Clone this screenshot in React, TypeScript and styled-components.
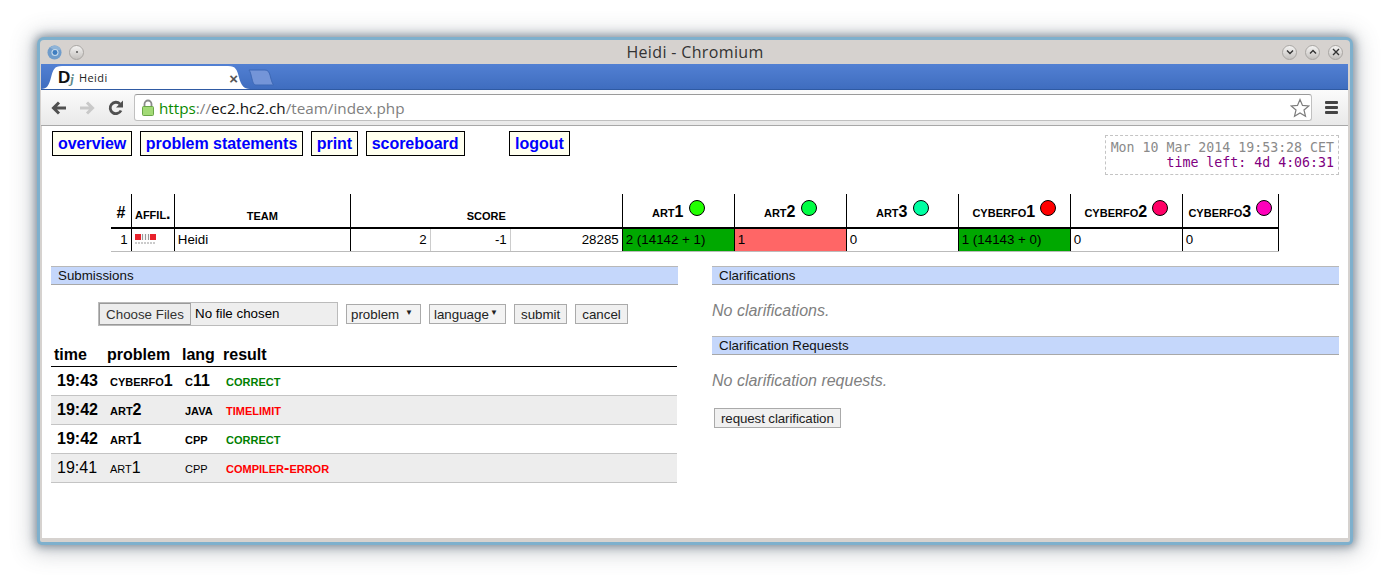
import React from 'react';
import styled, { createGlobalStyle } from 'styled-components';

const GlobalStyle = createGlobalStyle`
  html, body {
    margin: 0;
    padding: 0;
    background: #fff;
  }
  body {
    font-family: "Liberation Sans", Arial, sans-serif;
    font-size: 13.33px;
    color: #000;
  }
`;

const problems = [
  { short: 'art', num: '1', color: '#22ff00', cell: '2 (14142 + 1)', state: 'correct' },
  { short: 'art', num: '2', color: '#00ff44', cell: '1', state: 'wrong' },
  { short: 'art', num: '3', color: '#00ffa2', cell: '0', state: 'none' },
  { short: 'cyberfo', num: '1', color: '#ff0000', cell: '1 (14143 + 0)', state: 'correct' },
  { short: 'cyberfo', num: '2', color: '#ff0066', cell: '0', state: 'none' },
  { short: 'cyberfo', num: '3', color: '#ff00bb', cell: '0', state: 'none' },
];

const submissions = [
  { time: '19:43', prob: 'cyberfo', num: '1', lang: 'c11', result: 'correct', ok: true, fresh: true },
  { time: '19:42', prob: 'art', num: '2', lang: 'java', result: 'timelimit', ok: false, fresh: true },
  { time: '19:42', prob: 'art', num: '1', lang: 'cpp', result: 'correct', ok: true, fresh: true },
  { time: '19:41', prob: 'art', num: '1', lang: 'cpp', result: 'compiler-error', ok: false, fresh: false },
];

const WinButton = ({ kind }: { kind: 'down' | 'up' | 'close' }) => (
  <CircleButton>
    <svg width="10" height="10" viewBox="0 0 10 10" fill="none" stroke="#333" strokeWidth="1.4">
      {kind === 'down' && <path d="M2 3.5 L5 6.5 L8 3.5" />}
      {kind === 'up' && <path d="M2 6.5 L5 3.5 L8 6.5" />}
      {kind === 'close' && <path d="M2 2 L8 8 M8 2 L2 8" />}
    </svg>
  </CircleButton>
);

export default function App() {
  return (
    <>
      <GlobalStyle />
      <Page>
        <Window>
          <TitleBar>
            <TitleLeft>
              <svg width="15" height="15" viewBox="0 0 16 16">
                <circle cx="8" cy="8" r="7.5" fill="#6f9ccb" />
                <path d="M8 .5 A7.5 7.5 0 0 1 15 5.5 L8 5 L3 3 A7.5 7.5 0 0 1 8 .5 Z" fill="#8fb4d8" />
                <circle cx="8.5" cy="8" r="3.8" fill="#c4d8ea" />
                <circle cx="8.5" cy="8" r="2.6" fill="#3f7dc0" />
              </svg>
              <PinButton>
                <PinDot />
              </PinButton>
            </TitleLeft>
            <TitleText>Heidi - Chromium</TitleText>
            <TitleRight>
              <WinButton kind="down" />
              <WinButton kind="up" />
              <WinButton kind="close" />
            </TitleRight>
          </TitleBar>

          <TabStrip>
            <Tab>
              <TabShape viewBox="0 0 209 26" preserveAspectRatio="none">
                <path d="M0 26 C6 26 8 22 10 14 C12 6 13 2 21 2 L187 2 C195 2 196 6 198 14 C200 22 203 26 209 26 Z" fill="#fff" />
              </TabShape>
              <Favicon>
                D<FaviconJ>j</FaviconJ>
              </Favicon>
              <TabTitle>Heidi</TabTitle>
              <TabClose>×</TabClose>
            </Tab>
            <NewTab viewBox="0 0 26 17">
              <path d="M1 1 L17 1 C20 1 21 3 22 6 C23 10 24 14 25.5 16 L8 16 C6 16 5 14 4 10 C3 6 2.5 3 1 1 Z" fill="#7495d8" stroke="#3d68b5" />
            </NewTab>
          </TabStrip>

          <Toolbar>
            <NavIcon viewBox="0 0 18 18" width="18" height="18">
              <path d="M16 9 H4 M9 3.5 L3.5 9 L9 14.5" fill="none" stroke="#505050" strokeWidth="3" />
            </NavIcon>
            <NavIcon viewBox="0 0 18 18" width="18" height="18">
              <path d="M2 9 H14 M9 3.5 L14.5 9 L9 14.5" fill="none" stroke="#c9c9c9" strokeWidth="3" />
            </NavIcon>
            <NavIcon viewBox="0 0 18 18" width="18" height="18">
              <path d="M15 11.5 A5.7 5.7 0 1 1 14 5" fill="none" stroke="#505050" strokeWidth="2.8" />
              <path d="M17 1.5 V8.5 H10 Z" fill="#505050" />
            </NavIcon>
            <Omnibox>
              <svg width="14" height="17" viewBox="0 0 14 17">
                <path d="M3.5 8 V5 A3.5 3.5 0 0 1 10.5 5 V8" fill="none" stroke="#8a8a8a" strokeWidth="1.8" />
                <rect x="1.5" y="7.5" width="11" height="9" rx="1" fill="#a2da76" stroke="#6aa548" />
              </svg>
              <Url>
                <UrlScheme>https</UrlScheme>
                <UrlGrey>://</UrlGrey>
                <UrlHost>ec2.hc2.ch</UrlHost>
                <UrlGrey>/team/index.php</UrlGrey>
              </Url>
              <svg width="20" height="20" viewBox="0 0 20 20">
                <path d="M10 1.5 L12.5 7.4 L18.8 7.9 L14 12 L15.5 18.3 L10 15 L4.5 18.3 L6 12 L1.2 7.9 L7.5 7.4 Z" fill="#fff" stroke="#7d7d7d" strokeWidth="1.2" />
              </svg>
            </Omnibox>
            <Menu>
              <MenuBar />
              <MenuBar />
              <MenuBar />
            </Menu>
          </Toolbar>

          <Content>
            <TopRow>
              <Nav>
                <NavLink>overview</NavLink>
                <NavLink>problem statements</NavLink>
                <NavLink>print</NavLink>
                <NavLink>scoreboard</NavLink>
                <NavLink $apart>logout</NavLink>
              </Nav>
              <Clock>
                <ClockNow>Mon 10 Mar 2014 19:53:28 CET</ClockNow>
                <ClockLeft>time left: 4d 4:06:31</ClockLeft>
              </Clock>
            </TopRow>

            <Scoreboard>
              <colgroup>
                <col width="20" />
                <col width="43" />
                <col width="176" />
                <col width="80" />
                <col width="80" />
                <col width="112" />
                <col width="112" />
                <col width="112" />
                <col width="112" />
                <col width="112" />
                <col width="112" />
                <col width="96" />
              </colgroup>
              <thead>
                <tr>
                  <RankHead>#</RankHead>
                  <SmallHead>affil.</SmallHead>
                  <SmallHead $low>team</SmallHead>
                  <SmallHead $low colSpan={3}>score</SmallHead>
                  {problems.map((p) => (
                    <ProbHead key={p.short + p.num}>
                      <ProbLabel>
                        {p.short}
                        {p.num}
                      </ProbLabel>
                      <Balloon $color={p.color} />
                    </ProbHead>
                  ))}
                </tr>
              </thead>
              <tbody>
                <tr>
                  <NumCell>1</NumCell>
                  <LogoCell>
                    <svg width="21" height="12" viewBox="0 0 21 12" style={{ display: 'block' }}>
                      <rect x="0" y="0" width="6" height="6" fill="#e8222c" />
                      <rect x="15" y="0" width="6" height="6" fill="#e8222c" />
                      <path d="M7.5 0 V6 M10.5 0 V6 M13.5 0 V6" stroke="#999" strokeWidth="1.2" />
                      <path d="M0 9 H21" stroke="#bbb" strokeWidth="1.5" strokeDasharray="2 1" />
                    </svg>
                  </LogoCell>
                  <TeamCell>Heidi</TeamCell>
                  <NumCell $light>2</NumCell>
                  <NumCell $light>-1</NumCell>
                  <NumCell>28285</NumCell>
                  {problems.map((p) => (
                    <ScoreCell key={p.short + p.num} $state={p.state}>
                      {p.cell}
                    </ScoreCell>
                  ))}
                </tr>
              </tbody>
            </Scoreboard>

            <Columns>
              <Column>
                <SectionHead>Submissions</SectionHead>
                <UploadRow>
                  <FileBox>
                    <FileButton>Choose Files</FileButton>
                    <FileLabel>No file chosen</FileLabel>
                  </FileBox>
                  <Select $width={75}>
                    problem<Caret>▼</Caret>
                  </Select>
                  <Select $width={77}>
                    language<Caret>▼</Caret>
                  </Select>
                  <FormButton>submit</FormButton>
                  <FormButton>cancel</FormButton>
                </UploadRow>
                <SubTable>
                  <colgroup>
                    <col width="53" />
                    <col width="75" />
                    <col width="41" />
                    <col />
                  </colgroup>
                  <thead>
                    <tr>
                      <SubHead>time</SubHead>
                      <SubHead>problem</SubHead>
                      <SubHead>lang</SubHead>
                      <SubHead>result</SubHead>
                    </tr>
                  </thead>
                  <tbody>
                    {submissions.map((s) => (
                      <SubRow key={s.time + s.prob + s.num} $fresh={s.fresh}>
                        <SubTime>{s.time}</SubTime>
                        <SubCaps>
                          {s.prob}
                          {s.num}
                        </SubCaps>
                        <SubCaps>{s.lang}</SubCaps>
                        <SubResult $ok={s.ok}>{s.result}</SubResult>
                      </SubRow>
                    ))}
                  </tbody>
                </SubTable>
              </Column>
              <Column>
                <SectionHead>Clarifications</SectionHead>
                <NoneText>No clarifications.</NoneText>
                <SectionHead>Clarification Requests</SectionHead>
                <NoneText>No clarification requests.</NoneText>
                <RequestRow>
                  <FormButton $tight>request clarification</FormButton>
                </RequestRow>
              </Column>
            </Columns>
          </Content>
        </Window>
      </Page>
    </>
  );
}

const Page = styled.div`
  width: 1390px;
  height: 582px;
  padding: 40px 0 0 40px;
  box-sizing: border-box;
  overflow: hidden;
`;

const Window = styled.div`
  width: 1310px;
  height: 502px;
  box-sizing: border-box;
  background: #d6d2cf;
  border-radius: 4px 4px 2px 2px;
  padding: 0 2px 4px 1px;
  display: flex;
  flex-direction: column;
  box-shadow: 0 0 0 3px #7eb0cd, 0 0 8px 5px rgba(70, 90, 110, 0.55), 0 2px 22px 8px rgba(80, 90, 100, 0.3);
`;

const TitleBar = styled.div`
  height: 24px;
  flex: none;
  display: flex;
  align-items: center;
  justify-content: space-between;
  padding: 0 5px 0 6px;
`;

const TitleLeft = styled.div`
  flex: 1;
  display: flex;
  align-items: center;
  gap: 7px;
`;

const TitleRight = styled.div`
  flex: 1;
  display: flex;
  align-items: center;
  justify-content: flex-end;
  gap: 8px;
`;

const TitleText = styled.div`
  font-family: "Open Sans", sans-serif;
  font-size: 16px;
  color: #333;
  letter-spacing: 0.35px;
`;

const CircleButton = styled.div`
  width: 15px;
  height: 15px;
  border-radius: 50%;
  background: linear-gradient(#f4f3f2, #c4c1be);
  border: 1px solid #a9a6a3;
  box-sizing: border-box;
  display: flex;
  align-items: center;
  justify-content: center;
`;

const PinButton = styled(CircleButton)``;

const PinDot = styled.div`
  width: 2px;
  height: 2px;
  border-radius: 50%;
  background: #555;
`;

const TabStrip = styled.div`
  height: 26px;
  flex: none;
  background: linear-gradient(#5280d3, #3f6dbf);
  border-bottom: 1px solid #2f5aa3;
  box-sizing: border-box;
  display: flex;
  align-items: flex-end;
`;

const Tab = styled.div`
  position: relative;
  width: 209px;
  height: 25px;
  box-sizing: border-box;
  padding: 2px 12px 0 17px;
  display: flex;
  align-items: center;
`;

const TabShape = styled.svg`
  position: absolute;
  left: 0;
  top: 0;
  width: 100%;
  height: 100%;
`;

const Favicon = styled.span`
  position: relative;
  width: 21px;
  font-family: "Liberation Sans", sans-serif;
  font-weight: bold;
  font-size: 17px;
  color: #111;
`;

const FaviconJ = styled.span`
  font-family: "Liberation Serif", serif;
  font-style: italic;
  font-size: 13px;
  color: #5e8a8c;
`;

const TabTitle = styled.span`
  position: relative;
  flex: 1;
  font-family: "Open Sans", sans-serif;
  font-size: 11px;
  letter-spacing: 0.4px;
  color: #222;
`;

const TabClose = styled.span`
  position: relative;
  top: 1px;
  font-size: 15px;
  font-weight: bold;
  color: #555;
`;

const NewTab = styled.svg`
  width: 26px;
  height: 17px;
  flex: none;
  margin: 0 0 3px -2px;
`;

const Toolbar = styled.div`
  height: 36px;
  flex: none;
  box-sizing: border-box;
  background: linear-gradient(#fbfbfb, #e9e9e9);
  border-bottom: 1px solid #a8a8a8;
  display: flex;
  align-items: center;
  padding: 0 10px 0 9px;
  gap: 10px;
`;

const NavIcon = styled.svg`
  flex: none;
`;

const Omnibox = styled.div`
  flex: 1;
  height: 27px;
  box-sizing: border-box;
  background: #fff;
  border: 1px solid #c0c0c0;
  border-top-color: #9a9a9a;
  border-radius: 3px;
  display: flex;
  align-items: center;
  padding: 0 1px 0 6px;
  gap: 4px;
`;

const Url = styled.div`
  flex: 1;
  font-family: "Open Sans", sans-serif;
  font-size: 15.25px;
  white-space: nowrap;
`;

const UrlScheme = styled.span`
  color: #0a8a00;
`;

const UrlGrey = styled.span`
  color: #808080;
`;

const UrlHost = styled.span`
  color: #111;
`;

const Menu = styled.div`
  width: 13px;
  flex: none;
  margin-left: 3px;
  display: flex;
  flex-direction: column;
  gap: 2px;
`;

const MenuBar = styled.div`
  height: 3px;
  background: #444;
  border-radius: 1px;
`;

const Content = styled.div`
  flex: 1;
  min-height: 0;
  background: #fff;
  padding: 5px 9px 0;
  border-left: 1px solid #d6d2cf;
`;

const TopRow = styled.div`
  height: 63px;
  display: flex;
  justify-content: space-between;
  align-items: flex-start;
`;

const Nav = styled.nav`
  display: flex;
  gap: 7.5px;
  margin-left: 1px;
`;

const NavLink = styled.a<{ $apart?: boolean }>`
  height: 25px;
  box-sizing: border-box;
  border: 1px solid #000;
  background: #ffffef;
  color: #0000ff;
  font-size: 16px;
  font-weight: bold;
  line-height: 23px;
  letter-spacing: -0.03px;
  padding: 0 5px;
  margin-left: ${(p) => (p.$apart ? '37px' : '0')};
`;

const Clock = styled.div`
  width: 234px;
  height: 40px;
  box-sizing: border-box;
  margin-top: 4px;
  border: 1px dashed #c4c4c4;
  padding: 4px 4px 0 0;
  text-align: right;
  font-family: "DejaVu Sans Mono", monospace;
  font-size: 13.25px;
  line-height: 15px;
`;

const ClockNow = styled.div`
  color: #8a8a8a;
`;

const ClockLeft = styled.div`
  color: #800080;
`;

const Scoreboard = styled.table`
  width: 1167px;
  margin: 0 auto;
  table-layout: fixed;
  border-collapse: collapse;
  font-size: 13.33px;
`;

const HeadBase = styled.th`
  height: 34px;
  box-sizing: border-box;
  padding: 0;
  border-left: 1px solid #000;
  border-bottom: 2px solid #000;
  font-weight: bold;
  vertical-align: bottom;
  &:first-child {
    border-left: none;
  }
  &:last-child {
    border-right: 1px solid #000;
  }
`;

const RankHead = styled(HeadBase)`
  font-size: 16px;
  line-height: 18px;
  padding-bottom: 5px;
`;

const SmallHead = styled(HeadBase)<{ $low?: boolean }>`
  font-size: 16px;
  font-variant: small-caps;
  white-space: nowrap;
  line-height: 16px;
  padding-bottom: ${(p) => (p.$low ? '4px' : '5px')};
`;

const ProbHead = styled(HeadBase)`
  padding-bottom: 6px;
  white-space: nowrap;
`;

const ProbLabel = styled.span`
  font-size: 16px;
  font-variant: small-caps;
`;

const Balloon = styled.span<{ $color: string }>`
  display: inline-block;
  width: 16px;
  height: 16px;
  box-sizing: border-box;
  margin-left: 5px;
  vertical-align: 1px;
  border-radius: 50%;
  border: 1px solid #000;
  background: ${(p) => p.$color};
`;

const BodyCell = styled.td`
  height: 23px;
  box-sizing: border-box;
  padding: 0 3px;
  border-left: 1px solid #000;
  border-bottom: 1px solid #bbb;
`;

const NumCell = styled(BodyCell)<{ $light?: boolean }>`
  text-align: right;
  padding-right: 3px;
  border-right: ${(p) => (p.$light ? '1px solid #ccc' : 'none')};
  &:first-child {
    border-left: none;
  }
`;

const LogoCell = styled(BodyCell)`
  padding: 0 3px;
`;

const TeamCell = styled(BodyCell)`
  padding-left: 3px;
`;

const ScoreCell = styled(BodyCell)<{ $state: string }>`
  background: ${(p) => (p.$state === 'correct' ? '#00a800' : p.$state === 'wrong' ? '#ff6666' : '#fff')};
  &:last-child {
    border-right: 1px solid #000;
  }
`;

const Columns = styled.div`
  margin-top: 14px;
  display: grid;
  grid-template-columns: 627px 627px;
  column-gap: 34px;
`;

const Column = styled.div``;

const SectionHead = styled.div`
  height: 19px;
  box-sizing: border-box;
  background: #c5d7fb;
  border-top: 1px solid #b8b8b8;
  border-bottom: 1px solid #a8a8a8;
  padding-left: 7px;
  line-height: 17px;
  font-size: 13.33px;
  color: #111;
`;

const UploadRow = styled.div`
  height: 24px;
  margin: 17px 0 18px;
  padding-left: 47px;
  display: flex;
  align-items: center;
  gap: 8px;
`;

const FileBox = styled.div`
  width: 240px;
  height: 24px;
  box-sizing: border-box;
  display: flex;
  align-items: center;
  background: #eee;
  border: 1px solid #bbb;
`;

const FileButton = styled.div`
  width: 92px;
  height: 22px;
  box-sizing: border-box;
  border: 1px solid #9a9a9a;
  border-right-color: #aaa;
  background: #ededed;
  text-align: center;
  line-height: 21px;
  color: #333;
`;

const FileLabel = styled.div`
  padding-left: 4px;
`;

const Select = styled.div<{ $width: number }>`
  width: ${(p) => p.$width}px;
  height: 20px;
  box-sizing: border-box;
  border: 1px solid #aaa;
  background: #f3f3f3;
  padding: 0 7px 0 4px;
  line-height: 19px;
  display: flex;
  justify-content: space-between;
  color: #222;
`;

const Caret = styled.span`
  font-size: 8px;
  line-height: 16px;
`;

const FormButton = styled.div<{ $tight?: boolean }>`
  height: 20px;
  box-sizing: border-box;
  border: 1px solid #aaa;
  background: #f0f0f0;
  padding: 0 6px;
  letter-spacing: ${(p) => (p.$tight ? '-0.1px' : '0')};
  line-height: 19px;
  color: #222;
`;

const SubTable = styled.table`
  width: 626px;
  table-layout: fixed;
  border-collapse: collapse;
`;

const SubHead = styled.th`
  height: 22px;
  padding: 0 3px;
  text-align: left;
  font-size: 16px;
  font-weight: bold;
  border-bottom: 1px solid #000;
`;

const SubRow = styled.tr<{ $fresh: boolean }>`
  height: 29px;
  font-weight: ${(p) => (p.$fresh ? 'bold' : 'normal')};
  &:nth-child(even) {
    background: #ededed;
  }
  td {
    padding: 0 0 0 6px;
    border-bottom: 1px solid #c4c4c4;
  }
`;

const SubTime = styled.td`
  font-size: 16px;
`;

const SubCaps = styled.td`
  font-size: 16px;
  font-variant: small-caps;
  white-space: nowrap;
`;

const SubResult = styled.td<{ $ok: boolean }>`
  font-size: 16px;
  font-variant: small-caps;
  font-weight: bold;
  color: ${(p) => (p.$ok ? '#008000' : '#ff0000')};
`;

const NoneText = styled.div`
  height: 51px;
  box-sizing: border-box;
  padding-top: 17px;
  font-size: 16px;
  font-style: italic;
  color: #808080;
  line-height: 18px;
`;

const RequestRow = styled.div`
  display: flex;
  padding: 0 0 0 2px;
  margin-top: 2px;
`;
